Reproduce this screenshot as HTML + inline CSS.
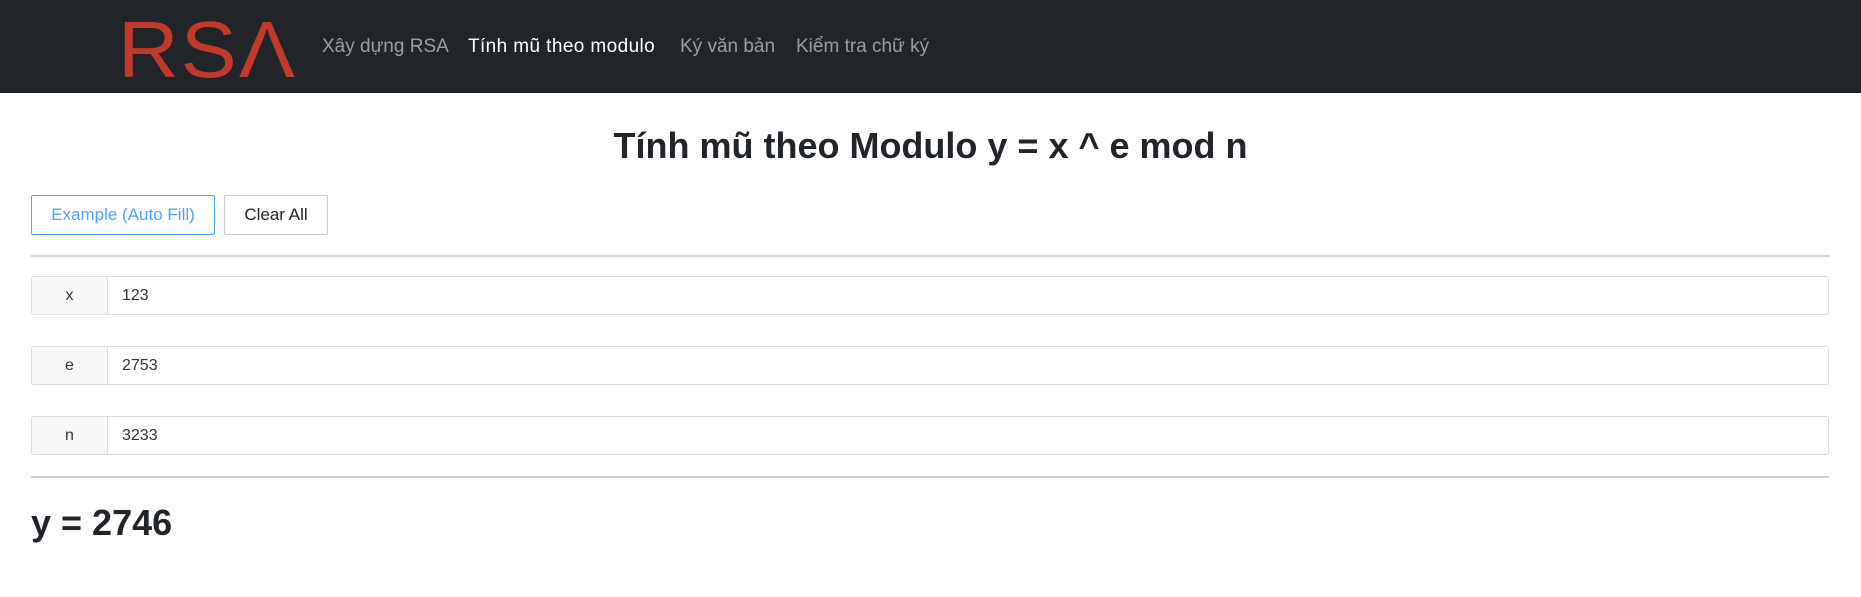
<!DOCTYPE html>
<html><head><meta charset="utf-8"><style>
body{margin:0;width:1861px;height:597px;background:#fff;font-family:"Liberation Sans",sans-serif;position:relative;overflow:hidden;color:#212529}
.nav{position:absolute;left:0;top:0;width:1861px;height:93px;background:#212529}
.logo{position:absolute;left:118px;top:8px;font-size:80px;color:#c0392b;line-height:84px;letter-spacing:2px;transform:scaleX(1.05);transform-origin:left}
.l{position:absolute;top:36px;font-size:19px;color:rgba(255,255,255,.55);white-space:nowrap}
h1{position:absolute;left:0;width:1861px;top:125px;margin:0;text-align:center;font-size:36px;font-weight:bold;line-height:42px}
.btn{position:absolute;top:195px;height:40px;box-sizing:border-box;border:1px solid #ccc;border-radius:2px;font-size:17px;line-height:38px;text-align:center}
.hr{position:absolute;left:31px;width:1798px;height:2px;background:#d0d0d0}
.row{position:absolute;left:31px;width:1798px;height:39px;box-sizing:border-box;border:1px solid #ddd;border-radius:3px;font-size:16px;line-height:37px}
.row .lab{position:absolute;left:0;top:0;width:75px;height:37px;background:#f8f8f8;border-right:1px solid #ddd;text-align:center;color:#333}
.row .v{position:absolute;left:90px;top:0;color:#333}
.res{position:absolute;left:31px;top:500px;font-size:36px;font-weight:bold;line-height:46px}
</style></head><body>
<div class="nav">
<div class="logo">RSΛ</div>
<div class="l" style="left:322px">Xây dựng RSA</div>
<div class="l" style="left:468px;color:#fff;letter-spacing:0.4px">Tính mũ theo modulo</div>
<div class="l" style="left:680px">Ký văn bản</div>
<div class="l" style="left:796px">Kiểm tra chữ ký</div>
</div>
<h1>Tính mũ theo Modulo y = x ^ e mod n</h1>
<div class="btn" style="left:31px;width:184px;border-color:#4da3ff;color:#4da3ff">Example (Auto Fill)</div>
<div class="btn" style="left:224px;width:104px;color:#222">Clear All</div>
<div class="hr" style="top:255px"></div>
<div class="row" style="top:276px"><div class="lab">x</div><div class="v">123</div></div>
<div class="row" style="top:346px"><div class="lab">e</div><div class="v">2753</div></div>
<div class="row" style="top:416px"><div class="lab">n</div><div class="v">3233</div></div>
<div class="hr" style="top:476px"></div>
<div class="res">y = 2746</div>
</body></html>
